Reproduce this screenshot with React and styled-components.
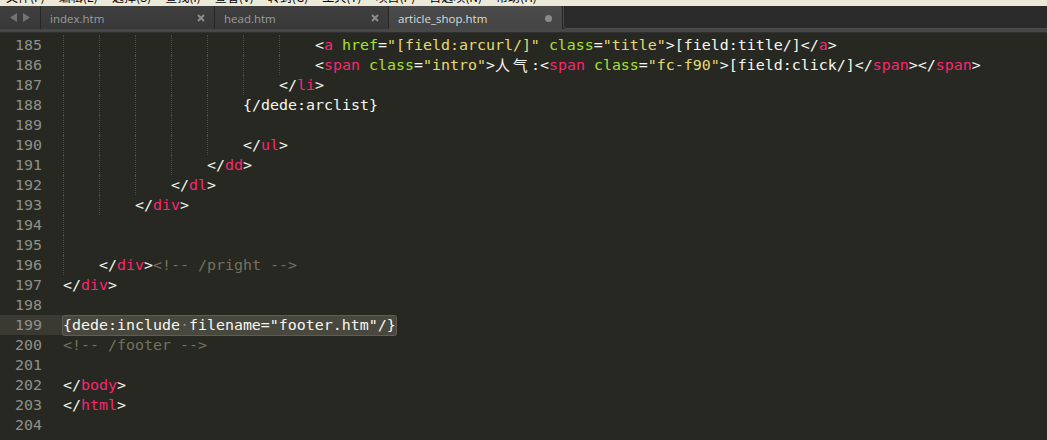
import React from 'react';
import styled, {createGlobalStyle} from 'styled-components';

const Global = createGlobalStyle`
    html, body {
        margin: 0;
        padding: 0;
        background: #272822;
        overflow: hidden;
    }
`;

const Window = styled.div`
    width: 1047px;
    height: 440px;
    display: flex;
    flex-direction: column;
    background: #272822;
    overflow: hidden;
`;

const MenuStrip = styled.div`
    height: 6px;
    background: #ece9d8;
    overflow: hidden;
    flex-shrink: 0;
`;

const MenuInner = styled.div`
    display: flex;
    gap: 14px;
    padding-left: 6px;
    margin-top: -11px;
    font-family: "Noto Sans CJK SC", sans-serif;
    font-size: 12px;
    line-height: 16px;
    color: #000;
    white-space: nowrap;
`;

const TabBar = styled.div`
    display: flex;
    height: 23px;
    background: #2b2b2b;
    flex-shrink: 0;
`;

const Nav = styled.div`
    width: 40px;
    display: flex;
    align-items: center;
    justify-content: center;
    gap: 6px;
    background: linear-gradient(#3f3f3f, #383838);
    border-right: 1px solid #262626;
`;

const Tab = styled.div`
    width: 174px;
    box-sizing: border-box;
    display: flex;
    align-items: center;
    justify-content: space-between;
    padding: 1px 9px 0 9px;
    font-family: "Open Sans", "Noto Sans", sans-serif;
    font-size: 11.5px;
    color: ${p => p.$active ? '#dcdcdc' : '#9c9c9c'};
    background: ${p => p.$active ? 'linear-gradient(#4b4b4b, #454545)' : 'linear-gradient(#3f3f3f, #383838)'};
    border-right: 1px solid #262626;
    border-top-right-radius: ${p => p.$active ? '3px' : '0'};
`;

const TabLabel = styled.span`
    padding-top: 1px;
`;

const Filler = styled.div`
    flex: 1;
    background: #2a2a2a;
    border-left: 1px solid #474747;
    border-bottom: 1px solid #4c4c4c;
    border-bottom-left-radius: 4px;
`;

const Dot = styled.span`
    width: 7px;
    height: 7px;
    border-radius: 50%;
    background: #8a8a8a;
    margin-right: 1px;
`;

const Rule = styled.div`
    height: 3px;
    background: #474747;
    border-bottom: 1px solid #313131;
    flex-shrink: 0;
`;

const Editor = styled.div`
    padding-top: 2px;
    font-family: "DejaVu Sans Mono", "Liberation Mono", monospace;
    font-size: 14.95px;
    line-height: 20px;
`;

const Line = styled.div`
    display: flex;
    height: 20px;
`;

const Gutter = styled.div`
    width: 42px;
    padding-right: 21px;
    text-align: right;
    color: #8f908a;
    background: ${p => p.$current ? '#3b3a32' : 'transparent'};
    flex-shrink: 0;
`;

const Code = styled.div`
    display: flex;
    white-space: pre;
    color: #f8f8f2;
`;

const Guide = styled.span`
    display: inline-block;
    width: 36px;
    height: 20px;
    box-sizing: border-box;
    border-left: 1px dotted #4e4f47;
`;

const Tok = styled.span`
    color: ${p => p.$c};
`;

const Cjk = styled.span`
    display: inline-block;
    width: 36px;
    height: 20px;
    font-family: "Noto Sans CJK SC", sans-serif;
    letter-spacing: 3px;
    color: #f8f8f2;
`;

const Selection = styled.span`
    display: inline-block;
    height: 19px;
    margin-top: 1px;
    line-height: 18px;
    background: #49483e;
    box-shadow: 0 0 0 1px #5e5d53;
    border-radius: 2px;
`;

const WsDot = styled.span`
    color: #8a897c;
`;

const C = {
    p: '#f8f8f2',
    t: '#f92672',
    a: '#a6e22e',
    s: '#e6db74',
    c: '#75715e',
};

const lines = [
    {n: 185, g: 7, toks: [['p','<'],['t','a'],['p',' '],['a','href'],['p','='],['s','"[field:arcurl/]"'],['p',' '],['a','class'],['p','='],['s','"title"'],['p','>[field:title/]</'],['t','a'],['p','>']]},
    {n: 186, g: 7, toks: [['p','<'],['t','span'],['p',' '],['a','class'],['p','='],['s','"intro"'],['p','>'],['cjk','人气'],['p',':<'],['t','span'],['p',' '],['a','class'],['p','='],['s','"fc-f90"'],['p','>[field:click/]</'],['t','span'],['p','></'],['t','span'],['p','>']]},
    {n: 187, g: 6, toks: [['p','</'],['t','li'],['p','>']]},
    {n: 188, g: 5, toks: [['p','{/dede:arclist}']]},
    {n: 189, g: 5, toks: []},
    {n: 190, g: 5, toks: [['p','</'],['t','ul'],['p','>']]},
    {n: 191, g: 4, toks: [['p','</'],['t','dd'],['p','>']]},
    {n: 192, g: 3, toks: [['p','</'],['t','dl'],['p','>']]},
    {n: 193, g: 2, toks: [['p','</'],['t','div'],['p','>']]},
    {n: 194, g: 1, toks: []},
    {n: 195, g: 1, toks: []},
    {n: 196, g: 1, toks: [['p','</'],['t','div'],['p','>'],['c','<!-- /pright -->']]},
    {n: 197, g: 0, toks: [['p','</'],['t','div'],['p','>']]},
    {n: 198, g: 0, toks: []},
    {n: 199, g: 0, sel: true},
    {n: 200, g: 0, toks: [['c','<!-- /footer -->']]},
    {n: 201, g: 0, toks: []},
    {n: 202, g: 0, toks: [['p','</'],['t','body'],['p','>']]},
    {n: 203, g: 0, toks: [['p','</'],['t','html'],['p','>']]},
    {n: 204, g: 0, toks: []},
];

const menus = ['文件(F)', '编辑(E)', '选择(S)', '查找(I)', '查看(V)', '转到(G)', '工具(T)', '项目(P)', '首选项(N)', '帮助(H)'];

const Arrow = ({left}) => (
    <svg width="7" height="9" viewBox="0 0 7 9">
        <polygon points={left ? '7,0 7,9 0,4.5' : '0,0 0,9 7,4.5'} fill="#737373" />
    </svg>
);

const CloseIcon = () => (
    <svg width="8" height="8" viewBox="0 0 8 8">
        <path d="M1 1 L7 7 M7 1 L1 7" stroke="#8c8c8c" strokeWidth="2" />
    </svg>
);

const App = () => {
    return (
        <>
        <Global />
        <Window>
            <MenuStrip>
                <MenuInner>
                    {menus.map(m => <span key={m}>{m}</span>)}
                </MenuInner>
            </MenuStrip>
            <TabBar>
                <Nav>
                    <Arrow left />
                    <Arrow />
                </Nav>
                <Tab>
                    <TabLabel>index.htm</TabLabel>
                    <CloseIcon />
                </Tab>
                <Tab>
                    <TabLabel>head.htm</TabLabel>
                    <CloseIcon />
                </Tab>
                <Tab $active>
                    <TabLabel>article_shop.htm</TabLabel>
                    <Dot />
                </Tab>
                <Filler />
            </TabBar>
            <Rule />
            <Editor>
                {lines.map(line => (
                    <Line key={line.n}>
                        <Gutter $current={line.sel}>{line.n}</Gutter>
                        <Code>
                            {Array.from({length: line.g}).map((_, i) => <Guide key={i} />)}
                            {line.sel
                                ? <Selection>{'{dede:include'}<WsDot>·</WsDot>{'filename="footer.htm"/}'}</Selection>
                                : line.toks.map(([k, text], i) => (
                                    k === 'cjk'
                                        ? <Cjk key={i}>{text}</Cjk>
                                        : <Tok key={i} $c={C[k]}>{text}</Tok>
                                ))
                            }
                        </Code>
                    </Line>
                ))}
            </Editor>
        </Window>
        </>
    );
};

export default App;
